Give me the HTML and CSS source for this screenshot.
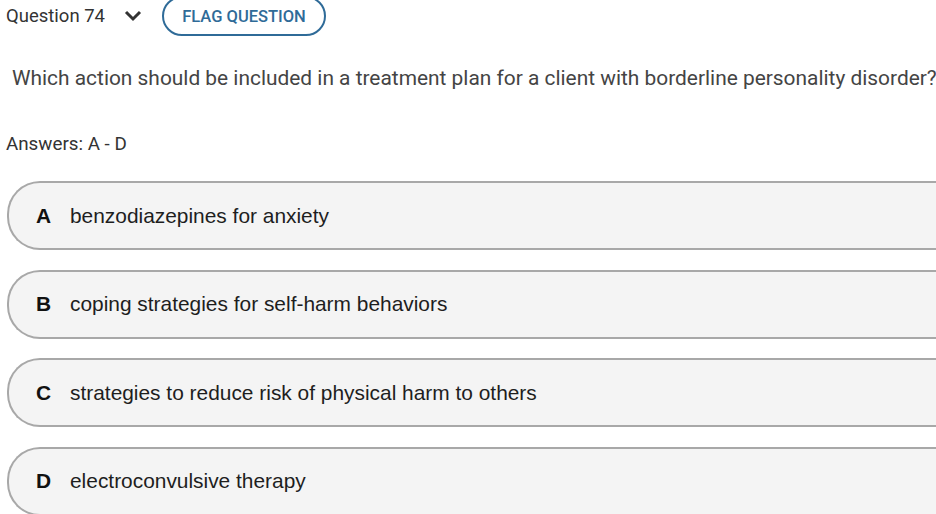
FILE: index.html
```html
<!DOCTYPE html>
<html>
<head>
<meta charset="utf-8">
<link rel="stylesheet" href="styles.css">
</head>
<body>
<div class="page">
  <header class="qbar">
    <span class="qnum">Question 74</span>
    <svg class="chev" width="18" height="12" viewBox="0 0 18 12"><path d="M2 2 L9 9 L16 2" fill="none" stroke="#333" stroke-width="3"/></svg>
    <button class="flag">FLAG QUESTION</button>
  </header>
  <p class="question">Which action should be included in a treatment plan for a client with borderline personality disorder?</p>
  <p class="answers">Answers: A - D</p>
  <div class="options">
    <div class="opt"><span class="letter">A</span><span class="txt">benzodiazepines for anxiety</span></div>
    <div class="opt"><span class="letter">B</span><span class="txt">coping strategies for self-harm behaviors</span></div>
    <div class="opt"><span class="letter">C</span><span class="txt">strategies to reduce risk of physical harm to others</span></div>
    <div class="opt"><span class="letter">D</span><span class="txt">electroconvulsive therapy</span></div>
  </div>
</div>
</body>
</html>
```
FILE: styles.css
```css
html, body {
  margin: 0;
  padding: 0;
  background: #fff;
  overflow: hidden;
}
.page {
  width: 1000px;
  font-family: Roboto, "Liberation Sans", sans-serif;
  color: #333;
}
.qbar {
  display: flex;
  align-items: center;
  height: 32px;
  padding-left: 6px;
}
.qnum {
  font-size: 18.5px;
  color: #333;
}
.chev {
  margin-left: 19px;
}
.flag {
  margin-left: 20px;
  height: 40px;
  width: 164px;
  border: 2px solid #2f6b98;
  border-radius: 20px;
  background: #fff;
  color: #2f6b98;
  font-family: Roboto, sans-serif;
  font-weight: 500;
  font-size: 16.5px;
  padding: 0;
}
.question {
  margin: 33px 0 0 12px;
  font-size: 20.9px;
  line-height: 26px;
  color: #444;
}
.answers {
  margin: 42px 0 0 6px;
  font-size: 18.8px;
  line-height: 22px;
  color: #333;
}
.options {
  display: flex;
  flex-direction: column;
  gap: 19.5px;
  margin: 26px 0 0 7px;
}
.opt {
  display: flex;
  align-items: center;
  height: 65px;
  border: 2px solid #a8a8a8;
  border-right: none;
  border-radius: 33px 0 0 33px;
  background: #f4f4f4;
  font-family: "Liberation Sans", Arial, sans-serif;
  font-size: 20.9px;
  color: #1e1e1e;
}
.letter {
  font-weight: bold;
  width: 14px;
  margin-left: 27px;
  color: #111;
}
.txt {
  margin-left: 20px;
}
```
